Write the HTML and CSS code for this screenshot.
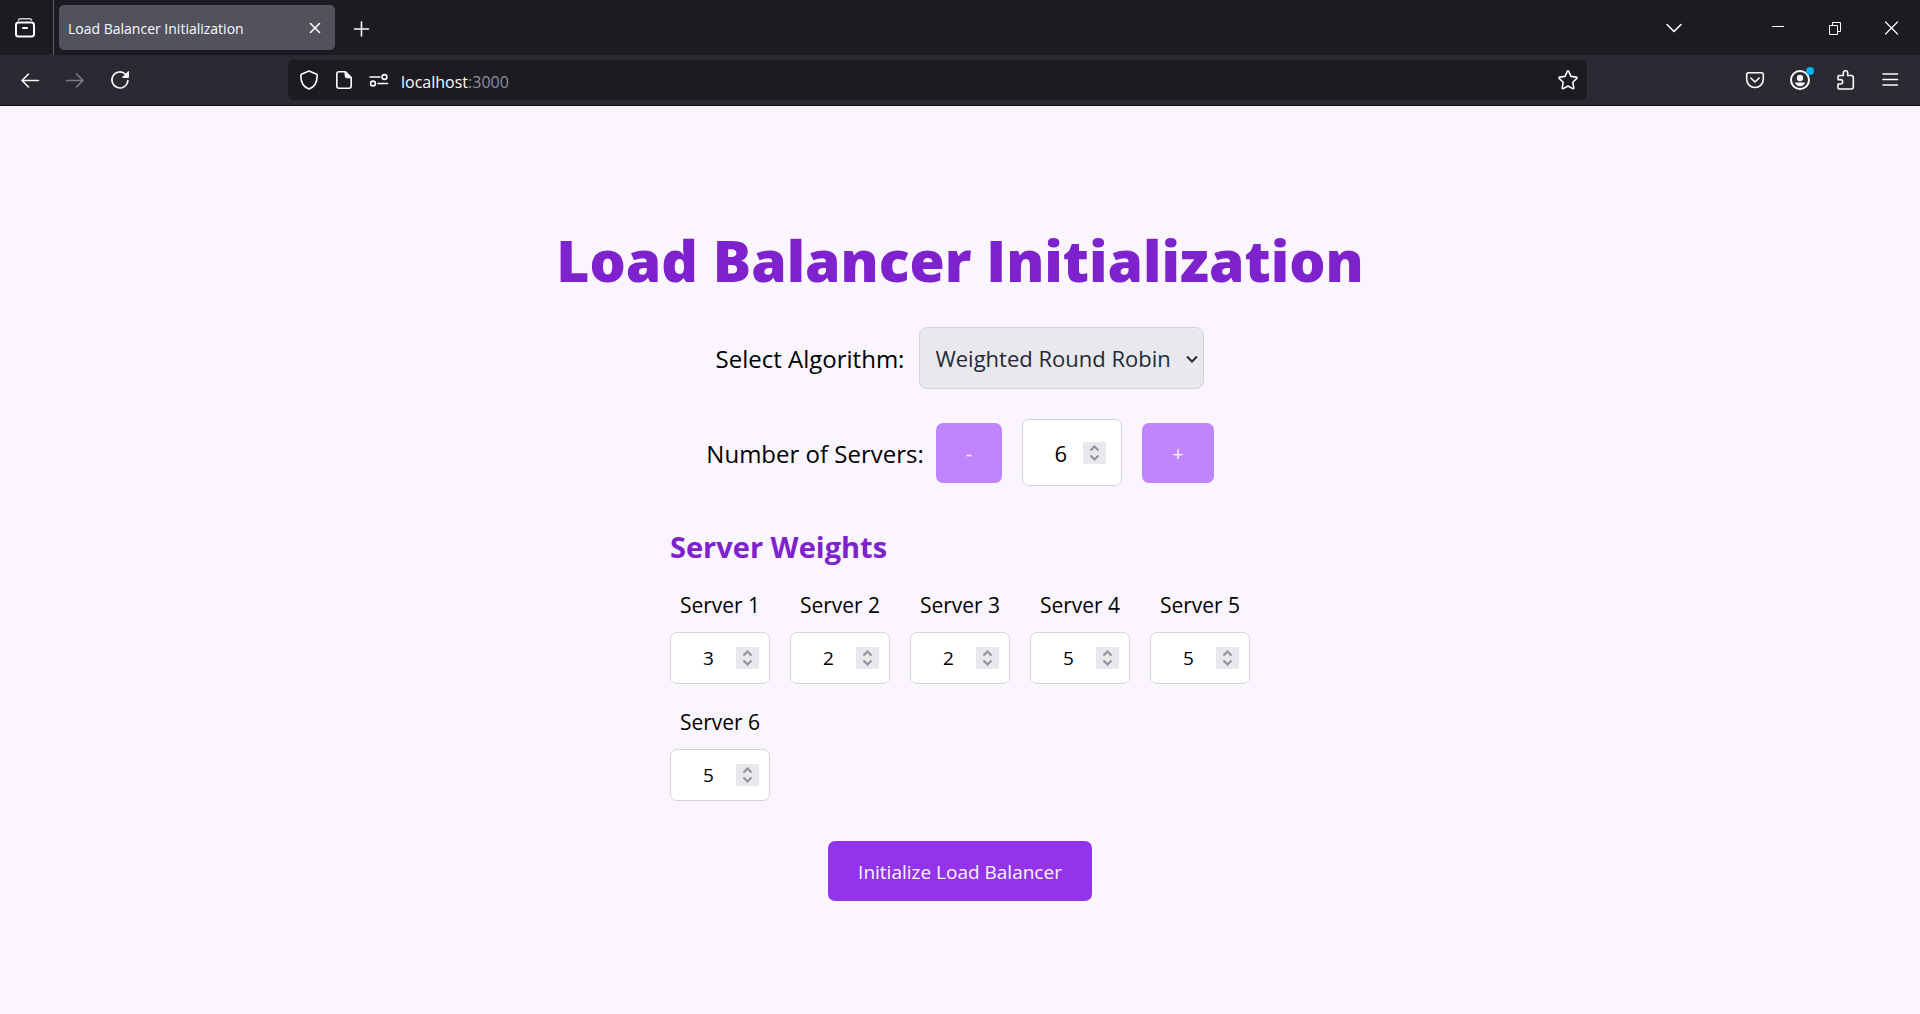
FILE: index.html
```html
<!DOCTYPE html>
<html lang="en">
<head>
<meta charset="utf-8">
<meta name="viewport" content="width=device-width, initial-scale=1">
<title>Load Balancer Initialization</title>
<link rel="stylesheet" href="styles.css">
</head>
<body>
<header class="browser">
  <div class="tabstrip">
    <button class="view-button" type="button" aria-label="Recent browsing">
      <svg class="icon" viewBox="0 0 20 20"><path class="dim" d="M3.500 1.900Q4 .8 5.500.8h9q1.500 0 2 1.100"/><rect class="bold" x="1" y="4.500" width="18" height="14" rx="2.500"/><path class="bold" d="M8 10h4"/></svg>
    </button>
    <div class="tab">
      <span class="tab-title">Load Balancer Initialization</span>
      <button class="tab-close" type="button" aria-label="Close tab">
        <svg class="icon" viewBox="0 0 20 20"><path d="M5.500 5.500l9 9M14.500 5.500l-9 9"/></svg>
      </button>
    </div>
    <button class="tool" type="button" aria-label="New tab">
      <svg class="icon" viewBox="0 0 20 20"><path d="M10.500 4v14M3.500 11h14"/></svg>
    </button>
    <div class="window-controls">
      <button class="tool all-tabs" type="button" aria-label="List all tabs">
        <svg class="icon" viewBox="0 0 20 20"><path d="M3 6.500l7 7 7-7"/></svg>
      </button>
      <button class="window-button" type="button" aria-label="Minimize">
        <svg class="icon crisp" viewBox="0 0 20 20"><path d="M4 8.500h12"/></svg>
      </button>
      <button class="window-button" type="button" aria-label="Restore">
        <svg class="icon crisp" viewBox="0 0 20 20"><path d="M4.500 7.500h8v9h-8zM7.500 7.500v-3h8v9h-3"/></svg>
      </button>
      <button class="window-button" type="button" aria-label="Close">
        <svg class="icon thin" viewBox="0 0 20 20"><path d="M3.500 4l12 12M15.500 4l-12 12"/></svg>
      </button>
    </div>
  </div>
  <div class="toolbar">
    <div class="tools">
      <button class="tool" type="button" aria-label="Back">
        <svg class="icon" viewBox="0 0 20 20"><path d="M18.500 10.500h-16M8.500 4L2 10.500 8.500 17"/></svg>
      </button>
      <button class="tool" type="button" aria-label="Forward" disabled>
        <svg class="icon" viewBox="0 0 20 20"><path d="M1.500 10.500h16M11.500 4L18 10.500 11.500 17"/></svg>
      </button>
      <button class="tool" type="button" aria-label="Reload">
        <svg class="icon" viewBox="0 0 20 20"><path d="M17.900 10.500A8 8 0 1 1 15.500 4.200"/><path class="solid" d="M18.400 1.800v5.600h-5.600z"/></svg>
      </button>
    </div>
    <div class="urlbar">
      <button class="site-button" type="button" aria-label="Tracking protection">
        <svg class="icon" viewBox="0 0 20 20"><path d="M10 1l7.200 2.900q1 .4 1 1.500C18.200 12 15.500 17 10 19 4.500 17 1.800 12 1.800 5.400q0-1.100 1-1.500z"/></svg>
      </button>
      <button class="site-button" type="button" aria-label="Site information">
        <svg class="icon" viewBox="0 0 20 20"><path d="M11.500 1.800H5Q2.800 1.800 2.800 4v12q0 2.200 2.200 2.200h10q2.200 0 2.200-2.200V7.500z"/><path class="solid" d="M11.200 1.800l6 6h-4.500q-1.500 0-1.500-1.500z"/></svg>
      </button>
      <button class="site-button" type="button" aria-label="Permissions">
        <svg class="icon" viewBox="0 0 20 20"><path d="M1 7h10M9 13.500h9.500"/><circle cx="15.500" cy="7" r="2.400"/><circle cx="4" cy="13.500" r="2.400"/></svg>
      </button>
      <p class="address">localhost<span class="port">:3000</span></p>
      <button class="site-button" type="button" aria-label="Bookmark this page">
        <svg class="icon" viewBox="0 0 20 20"><path d="M9.300 1.400q.7-1.100 1.400 0l2.300 5 5.300.7q1.200.3.5 1.300l-4 3.900 1 5.500q.1 1.300-1.100.8L10 16l-4.700 2.600q-1.200.5-1.100-.8l1-5.500-4-3.900q-.7-1 .5-1.300L7 6.400z"/></svg>
      </button>
    </div>
    <div class="tools">
      <button class="tool" type="button" aria-label="Save to Pocket">
        <svg class="icon" viewBox="0 0 20 20"><path d="M3.500 2.800h13q1.800 0 1.800 2v4.400a8.300 8.300 0 0 1-16.600 0V4.800q0-2 1.800-2z"/><path d="M5.800 8L10 12l4.200-4"/></svg>
      </button>
      <button class="tool account" type="button" aria-label="Account">
        <svg class="icon" viewBox="0 0 20 20"><circle class="bold" cx="10" cy="10" r="9"/><circle class="fill" cx="10" cy="8" r="3.200"/><path class="fill" d="M4.800 12.500h10.400Q14 16.200 10 16.200T4.800 12.500z"/></svg>
        <span class="badge"></span>
      </button>
      <button class="tool" type="button" aria-label="Extensions">
        <svg class="icon" viewBox="0 0 20 20"><path d="M4.500 5.500H8.300V3a2.200 2.200 0 0 1 4.400 0v2.500H16q2.300 0 2.300 2.200V17q0 2-2 2h-12Q3 19 3 17.500V14H5.500a2.200 2.200 0 0 0 0-4.400H3V7q0-1.500 1.500-1.500z"/></svg>
      </button>
      <button class="tool" type="button" aria-label="Menu">
        <svg class="icon" viewBox="0 0 20 20"><path d="M3 4h14.500M3 9.500h14.500M3 15h14.500"/></svg>
      </button>
    </div>
  </div>
</header>

<main class="page">
  <h1 class="title">Load Balancer Initialization</h1>
  <form class="form">
    <div class="row">
      <label class="row-label" for="algorithm">Select Algorithm:</label>
      <div class="select-box">
        <select class="select" id="algorithm">
          <option>Weighted Round Robin</option>
          <option>Round Robin</option>
        </select>
        <svg class="caret" viewBox="0 0 12 8"><path d="M1 1.500l5 5 5-5"/></svg>
      </div>
    </div>
    <div class="row servers-row">
      <label class="row-label" for="count">Number of Servers:</label>
      <div class="stepper">
        <button class="step" type="button">-</button>
        <div class="number large">
          <input class="number-input" id="count" type="number" value="6">
          <span class="spin"><svg class="spin-icon" viewBox="0 0 23 22"><path d="M7.500 8.500l4-4 4 4M7.500 13.500l4 4 4-4"/></svg></span>
        </div>
        <button class="step" type="button">+</button>
      </div>
    </div>
    <section class="weights">
      <h2 class="subtitle">Server Weights</h2>
      <div class="grid">
        <div class="server"><label class="server-label" for="s1">Server 1</label>
          <div class="number"><input class="number-input" id="s1" type="number" value="3"><span class="spin"><svg class="spin-icon" viewBox="0 0 23 22"><path d="M7.500 8.500l4-4 4 4M7.500 13.500l4 4 4-4"/></svg></span></div></div>
        <div class="server"><label class="server-label" for="s2">Server 2</label>
          <div class="number"><input class="number-input" id="s2" type="number" value="2"><span class="spin"><svg class="spin-icon" viewBox="0 0 23 22"><path d="M7.500 8.500l4-4 4 4M7.500 13.500l4 4 4-4"/></svg></span></div></div>
        <div class="server"><label class="server-label" for="s3">Server 3</label>
          <div class="number"><input class="number-input" id="s3" type="number" value="2"><span class="spin"><svg class="spin-icon" viewBox="0 0 23 22"><path d="M7.500 8.500l4-4 4 4M7.500 13.500l4 4 4-4"/></svg></span></div></div>
        <div class="server"><label class="server-label" for="s4">Server 4</label>
          <div class="number"><input class="number-input" id="s4" type="number" value="5"><span class="spin"><svg class="spin-icon" viewBox="0 0 23 22"><path d="M7.500 8.500l4-4 4 4M7.500 13.500l4 4 4-4"/></svg></span></div></div>
        <div class="server"><label class="server-label" for="s5">Server 5</label>
          <div class="number"><input class="number-input" id="s5" type="number" value="5"><span class="spin"><svg class="spin-icon" viewBox="0 0 23 22"><path d="M7.500 8.500l4-4 4 4M7.500 13.500l4 4 4-4"/></svg></span></div></div>
        <div class="server"><label class="server-label" for="s6">Server 6</label>
          <div class="number"><input class="number-input" id="s6" type="number" value="5"><span class="spin"><svg class="spin-icon" viewBox="0 0 23 22"><path d="M7.500 8.500l4-4 4 4M7.500 13.500l4 4 4-4"/></svg></span></div></div>
      </div>
    </section>
    <button class="submit" type="button">Initialize Load Balancer</button>
  </form>
</main>
</body>
</html>
```

FILE: styles.css
```css
* { box-sizing: border-box; }

body {
  display: flex;
  flex-direction: column;
  min-height: 100vh;
  margin: 0;
  background: #faf5ff;
  color: #000;
  font-family: "Open Sans", "Noto Sans", sans-serif;
}

button, input, select { font: inherit; }

h1, h2, p { margin: 0; }

/* Browser window */
.browser {
  border-bottom: 1px solid #0c0c0d;
  background: #2b2a33;
  color: #fbfbfe;
}

.browser button {
  display: flex;
  align-items: center;
  justify-content: center;
  padding: 0;
  border: 0;
  background: none;
  color: inherit;
}

.tabstrip {
  display: flex;
  align-items: center;
  height: 55px;
  background: #1c1b22;
}

.browser .view-button {
  align-self: stretch;
  width: 54px;
  padding-right: 4px;
  border-right: 1px solid #5b5b66;
}

.tab {
  display: flex;
  align-items: center;
  justify-content: space-between;
  width: 276px;
  height: 45px;
  margin: 0 6px 0 5px;
  padding: 0 10px 0 9px;
  border-radius: 5px;
  background: #52525e;
  font-size: 14px;
}

.tab-title { padding-top: 2px; }

.icon {
  width: 20px;
  height: 20px;
  overflow: visible;
  fill: none;
  stroke: currentColor;
  stroke-width: 1.6;
  stroke-linecap: round;
  stroke-linejoin: round;
}

.crisp { stroke-width: 1; stroke-linecap: butt; stroke-linejoin: miter; }
.thin { stroke-width: 1.2; }
.bold { stroke-width: 2; }
.dim { opacity: 0.8; }
.solid { fill: currentColor; stroke-width: 1; }
.fill { fill: currentColor; stroke: none; }

.browser .tool { position: relative; width: 40px; height: 40px; }
.tool:disabled { opacity: 0.4; }

.window-controls { display: flex; align-items: center; margin-left: auto; }
.browser .all-tabs { margin-right: 55px; }
.browser .window-button { width: 57px; height: 40px; }

.toolbar {
  display: flex;
  justify-content: space-between;
  align-items: center;
  gap: 148px;
  height: 50px;
  padding: 0 10px;
}

.tools { display: flex; gap: 5px; }

.badge {
  position: absolute;
  top: 7px;
  right: 6px;
  width: 8px;
  height: 8px;
  border-radius: 50%;
  background: #00b3f4;
}

.urlbar {
  display: flex;
  flex: 1;
  align-items: center;
  height: 40px;
  padding: 0 2px 0 3px;
  border-radius: 5px;
  background: #1c1b22;
}

.browser .site-button { width: 35px; height: 40px; }

.address { flex: 1; padding: 3px 0 0 5px; font-size: 16px; }
.port { color: #8f8f9d; }

/* Page */
.page {
  display: flex;
  flex: 1;
  flex-direction: column;
  align-items: center;
  padding: 124px 20px 112px;
}

.title {
  margin-bottom: 37px;
  color: #7e22ce;
  font-size: 57px;
  font-weight: 800;
  line-height: 60px;
  text-align: center;
}

.form { display: flex; flex-direction: column; align-items: center; }

.row { display: flex; align-items: center; gap: 15px; margin-bottom: 30px; }
.servers-row { gap: 12px; margin-bottom: 40px; }
.row-label { padding-top: 2px; font-size: 24px; line-height: 36px; }

.select-box { position: relative; }

.select {
  display: block;
  width: 285px;
  height: 62px;
  padding: 0 15px;
  appearance: none;
  border: 1px solid #d1d5db;
  border-radius: 8px;
  background: #e9e9ed;
  color: #1f2937;
  font-size: 22px;
}

.caret {
  position: absolute;
  top: 28px;
  right: 6px;
  width: 12px;
  height: 8px;
  fill: none;
  stroke: #1f2937;
  stroke-width: 2;
}

.stepper { display: flex; align-items: center; gap: 20px; }

.step {
  height: 60px;
  padding: 2px 30px 0;
  border: 0;
  border-radius: 7px;
  background: #c084fc;
  color: #faf5ff;
  font-size: 20px;
}

.number {
  display: flex;
  align-items: center;
  width: 100px;
  height: 52px;
  padding: 0 10px;
  border: 1px solid #d1d5db;
  border-radius: 7px;
  background: #fff;
  font-size: 19px;
}

.large { height: 67px; padding: 0 15px; font-size: 22px; }

.number-input {
  flex: 1;
  min-width: 0;
  padding: 0;
  appearance: textfield;
  border: 0;
  outline: 0;
  background: none;
  color: inherit;
  text-align: center;
}

.number-input::-webkit-inner-spin-button { display: none; }

.spin { display: flex; width: 23px; height: 22px; background: #e9e9ed; }

.spin-icon {
  width: 23px;
  height: 22px;
  fill: none;
  stroke: #8f8f9d;
  stroke-width: 2;
}

.weights { margin-bottom: 40px; }

.subtitle {
  margin-bottom: 20px;
  padding-top: 1px;
  color: #7e22ce;
  font-size: 29px;
  line-height: 40px;
}

.grid { display: grid; grid-template-columns: repeat(5, 100px); gap: 20px; }

.server { display: flex; flex-direction: column; align-items: center; gap: 9px; }
.server-label { font-size: 21px; line-height: 36px; }

.submit {
  height: 60px;
  padding: 2px 30px 0;
  border: 0;
  border-radius: 7px;
  background: #9333ea;
  color: #faf5ff;
  font-size: 19px;
}
```
